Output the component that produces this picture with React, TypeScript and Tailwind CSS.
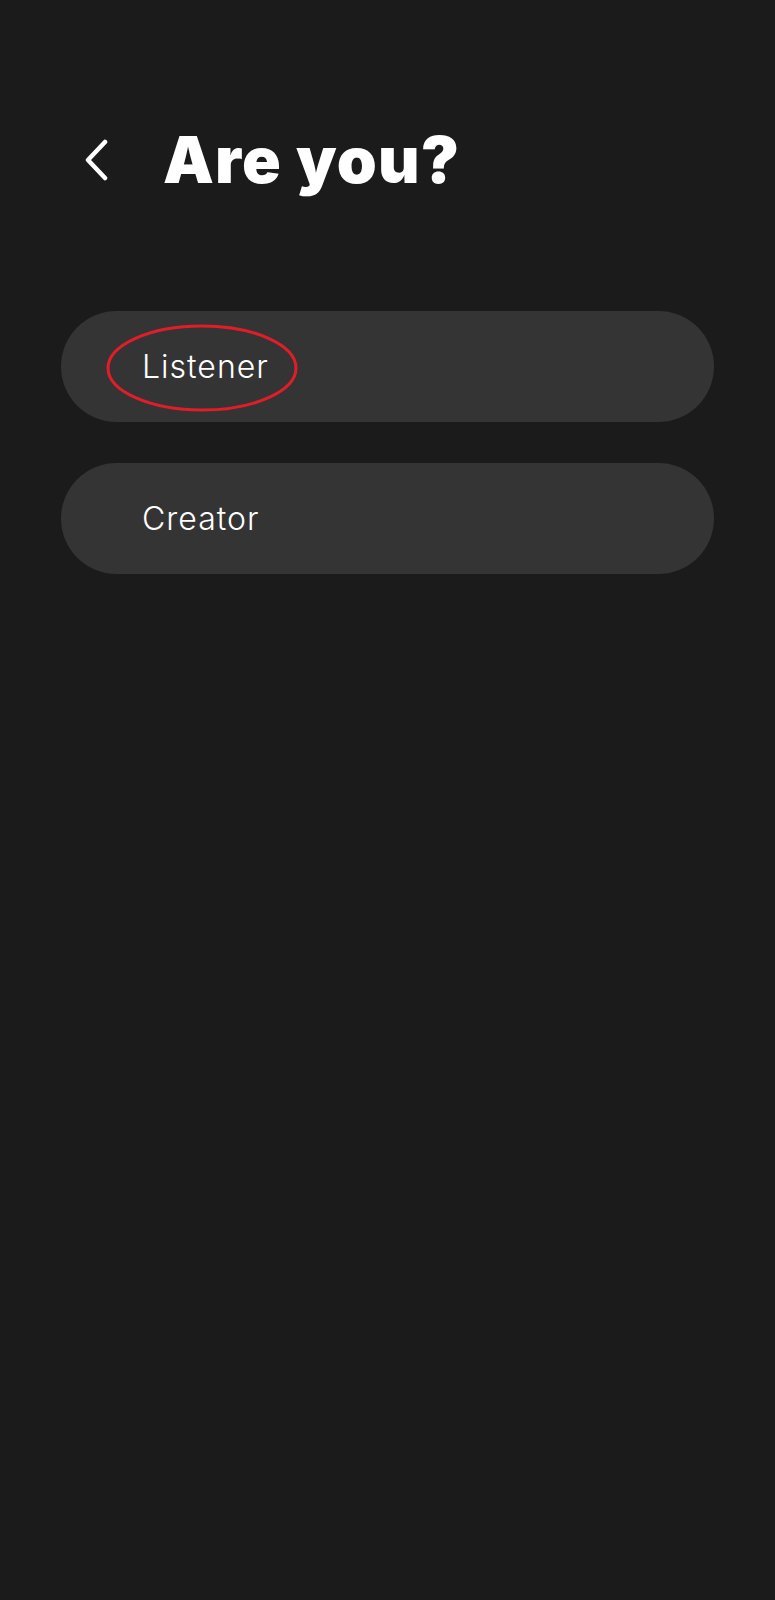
import React from "react";

const roles = ["Listener", "Creator"];

export default function App() {
  return (
    <div
      className="min-h-[1600px] w-full bg-[#1b1b1b] text-white px-[61px]"
      style={{ fontFamily: "Inter, 'Noto Sans', sans-serif" }}
    >
      <div className="flex items-center pt-[116px] pl-[22px]">
        <button className="w-[26px] h-[44px] flex items-center justify-center">
          <svg width="26" height="42" viewBox="0 0 26 42" fill="none">
            <path d="M22 3 L5 21 L22 39" stroke="white" strokeWidth="4.5" strokeLinecap="round" strokeLinejoin="round" />
          </svg>
        </button>
        <h1 className="ml-[54px] text-[64px] leading-[88px] font-black tracking-[1.2px]">Are you?</h1>
      </div>

      <div className="mt-[107px] flex flex-col gap-[41px]">
        {roles.map((role, i) => (
          <div key={role} className="relative h-[111px] rounded-full bg-[#343434] flex items-center pl-[81px]">
            <span className="text-[32px] font-light tracking-[1px]">{role}</span>
            {i === 0 && (
              <svg className="absolute left-[44px] top-[12px]" width="194" height="90" viewBox="0 0 194 90" fill="none">
                <ellipse cx="97" cy="45" rx="94" ry="42" stroke="#e11d2a" strokeWidth="3" />
              </svg>
            )}
          </div>
        ))}
      </div>
    </div>
  );
}
